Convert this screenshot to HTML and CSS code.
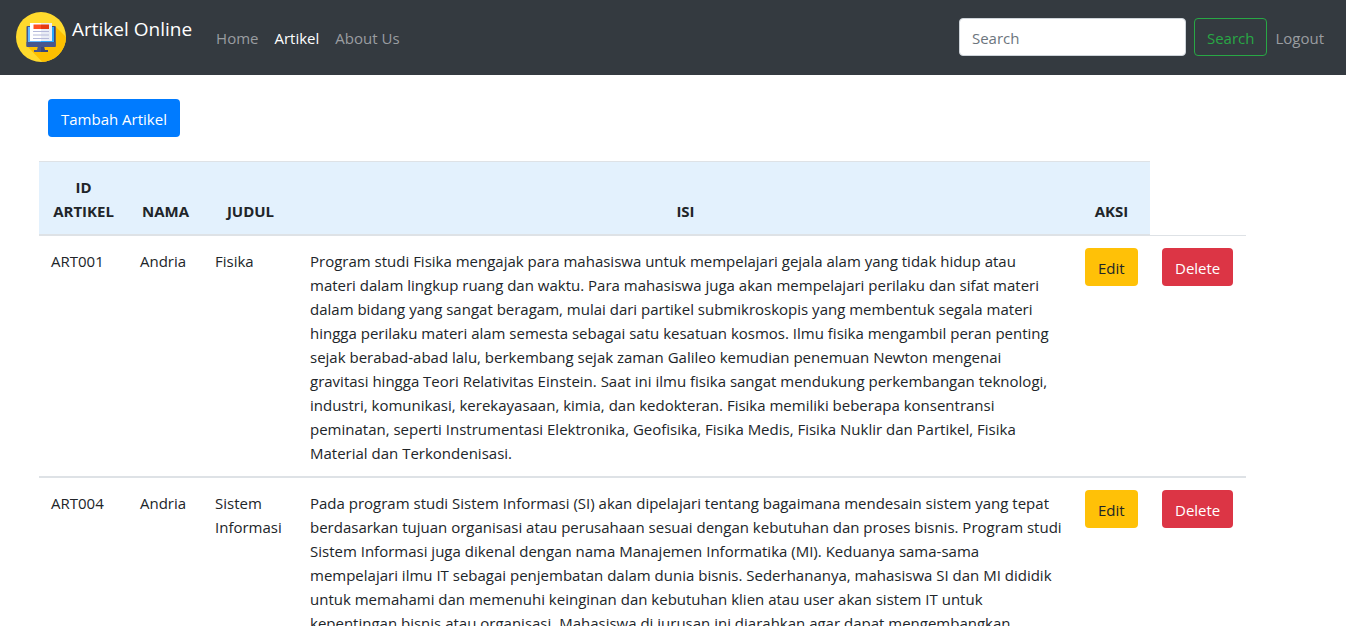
FILE: index.html
```html
<!DOCTYPE html>
<html lang="id">
<head>
<meta charset="utf-8">
<title>Artikel Online</title>
<link rel="stylesheet" href="styles.css">
</head>
<body>
<nav class="navbar">
  <a class="brand" href="#">
    <svg class="logo" viewBox="0 0 50 50" aria-hidden="true">
      <defs><clipPath id="disc"><circle cx="25" cy="25" r="25"/></clipPath></defs>
      <g clip-path="url(#disc)">
        <rect width="50" height="50" fill="#ffda2d"/>
        <path d="M39 14L60 35V60H36L11 34z" fill="#fdbf00"/>
      </g>
      <path d="M22 34h3v6h-7v-2h3z" fill="#47568c"/>
      <path d="M25 34h3l1 4h3v2h-7z" fill="#3a4679"/>
      <rect x="10.500" y="14" width="29" height="21" rx="1" fill="#47568c"/>
      <path d="M25 14h13.500q1 0 1 1v19q0 1-1 1H25z" fill="#3a4679"/>
      <rect x="12" y="15" width="13" height="15" fill="#60b7ff"/>
      <rect x="25" y="15" width="13" height="15" fill="#26a6fe"/>
      <path d="M10.500 30h29v4q0 1-1 1h-27q-1 0-1-1z" fill="#47568c"/>
      <path d="M14 11h11v18H14z" fill="#fff"/>
      <path d="M25 11h11v18H25z" fill="#e9edf5"/>
      <path d="M17.500 12.500H25V17h-7.500z" fill="#ff5023"/>
      <path d="M25 12.500h8V17h-8z" fill="#e63a12"/>
      <path d="M17 19.500h16M17 23h16M17 26.500h16" stroke="#b5b9da" stroke-width="1"/>
    </svg>
    <span>Artikel Online</span>
  </a>
  <ul class="nav-list">
    <li><a class="nav-link" href="#">Home</a></li>
    <li><a class="nav-link active" href="#">Artikel</a></li>
    <li><a class="nav-link" href="#">About Us</a></li>
  </ul>
  <form class="search">
    <input class="search-input" type="search" placeholder="Search" aria-label="Search">
    <button class="btn btn-outline" type="button">Search</button>
  </form>
  <a class="nav-link" href="#">Logout</a>
</nav>
<main class="content">
  <button class="btn btn-primary" type="button">Tambah Artikel</button>
  <table class="table">
    <colgroup>
      <col class="col-id"><col class="col-nama"><col class="col-judul"><col><col class="col-edit"><col class="col-delete">
    </colgroup>
    <thead>
      <tr>
        <th scope="col">ID ARTIKEL</th>
        <th scope="col">NAMA</th>
        <th scope="col">JUDUL</th>
        <th scope="col">ISI</th>
        <th scope="col">AKSI</th>
        <td class="blank"></td>
      </tr>
    </thead>
    <tbody>
      <tr>
        <td>ART001</td>
        <td>Andria</td>
        <td>Fisika</td>
        <td class="isi">Program studi Fisika mengajak para mahasiswa untuk mempelajari gejala alam yang tidak hidup atau materi dalam lingkup ruang dan waktu. Para mahasiswa juga akan mempelajari perilaku dan sifat materi dalam bidang yang sangat beragam, mulai dari partikel submikroskopis yang membentuk segala materi hingga perilaku materi alam semesta sebagai satu kesatuan kosmos. Ilmu fisika mengambil peran penting sejak berabad-abad lalu, berkembang sejak zaman Galileo kemudian penemuan Newton mengenai<br>gravitasi hingga Teori Relativitas Einstein. Saat ini ilmu fisika sangat mendukung perkembangan teknologi, industri, komunikasi, kerekayasaan, kimia, dan kedokteran. Fisika memiliki beberapa konsentransi peminatan, seperti Instrumentasi Elektronika, Geofisika, Fisika Medis, Fisika Nuklir dan Partikel, Fisika Material dan Terkondenisasi.</td>
        <td class="aksi"><button class="btn btn-warning" type="button">Edit</button></td>
        <td class="aksi"><button class="btn btn-danger" type="button">Delete</button></td>
      </tr>
      <tr>
        <td>ART004</td>
        <td>Andria</td>
        <td>Sistem Informasi</td>
        <td class="isi">Pada program studi Sistem Informasi (SI) akan dipelajari tentang bagaimana mendesain sistem yang tepat berdasarkan tujuan organisasi atau perusahaan sesuai dengan kebutuhan dan proses bisnis. Program studi Sistem Informasi juga dikenal dengan nama Manajemen Informatika (MI). Keduanya sama-sama mempelajari ilmu IT sebagai penjembatan dalam dunia bisnis. Sederhananya, mahasiswa SI dan MI dididik untuk memahami dan memenuhi keinginan dan kebutuhan klien atau user akan sistem IT untuk kepentingan bisnis atau organisasi. Mahasiswa di jurusan ini diarahkan agar dapat mengembangkan</td>
        <td class="aksi"><button class="btn btn-warning" type="button">Edit</button></td>
        <td class="aksi"><button class="btn btn-danger" type="button">Delete</button></td>
      </tr>
    </tbody>
  </table>
</main>
</body>
</html>
```
FILE: styles.css
```css
* { box-sizing: border-box; }
html { scrollbar-width: none; }
body {
  margin: 0;
  background: #fff;
  color: #212529;
  font: 15px/24px "Open Sans", "Noto Sans", sans-serif;
}
a { text-decoration: none; }

.navbar {
  display: flex;
  align-items: center;
  padding: 12px 14px 13px 16px;
  background: #343a40;
}
.brand {
  display: flex;
  gap: 6px;
  margin-right: 16px;
  color: #fff;
  font-size: 19px;
  line-height: 34px;
}
.logo { width: 50px; height: 50px; }
.nav-list {
  display: flex;
  flex: 1;
  margin: 0;
  padding: 0;
  list-style: none;
}
.nav-link {
  display: block;
  padding: 9px 8px 7px;
  color: #9a9da0;
}
.nav-link.active { color: #fff; }
.search { display: flex; gap: 8px; }
.search-input {
  width: 227px;
  height: 38px;
  padding: 7px 12px 5px;
  border: 1px solid #ced4da;
  border-radius: 4px;
  background: #fff;
  color: #495057;
  font: inherit;
  appearance: none;
}
.search-input::placeholder { color: #6c757d; opacity: 1; }

.btn {
  display: block;
  padding: 7px 12px 5px;
  border: 1px solid transparent;
  border-radius: 4px;
  font: inherit;
  white-space: nowrap;
  cursor: pointer;
}
.btn-outline { border-color: #28a745; background: transparent; color: #28a745; }
.btn-primary { margin-left: 9px; background: #007bff; color: #fff; }
.btn-warning { background: #ffc107; color: #212529; }
.btn-danger { background: #dc3545; color: #fff; }

.content { padding: 24px 100px 0 39px; }
.table {
  width: 100%;
  margin-top: 24px;
  border-collapse: separate;
  border-spacing: 0;
  table-layout: fixed;
}
.col-id { width: 89px; }
.col-nama { width: 75px; }
.col-judul { width: 95px; }
.col-edit { width: 77px; }
.col-delete { width: 96px; }
.table th,
.table td {
  padding: 13px 12px 11px;
  border-bottom: 2px solid #dee2e6;
  text-align: left;
  vertical-align: top;
}
.table th {
  border-top: 1px solid #dee2e6;
  background: #e3f1fd;
  text-align: center;
  vertical-align: bottom;
}
.table .blank { border-bottom-width: 1px; }
.table .isi { padding-right: 8px; }
.table .aksi { padding: 12px; }
```
